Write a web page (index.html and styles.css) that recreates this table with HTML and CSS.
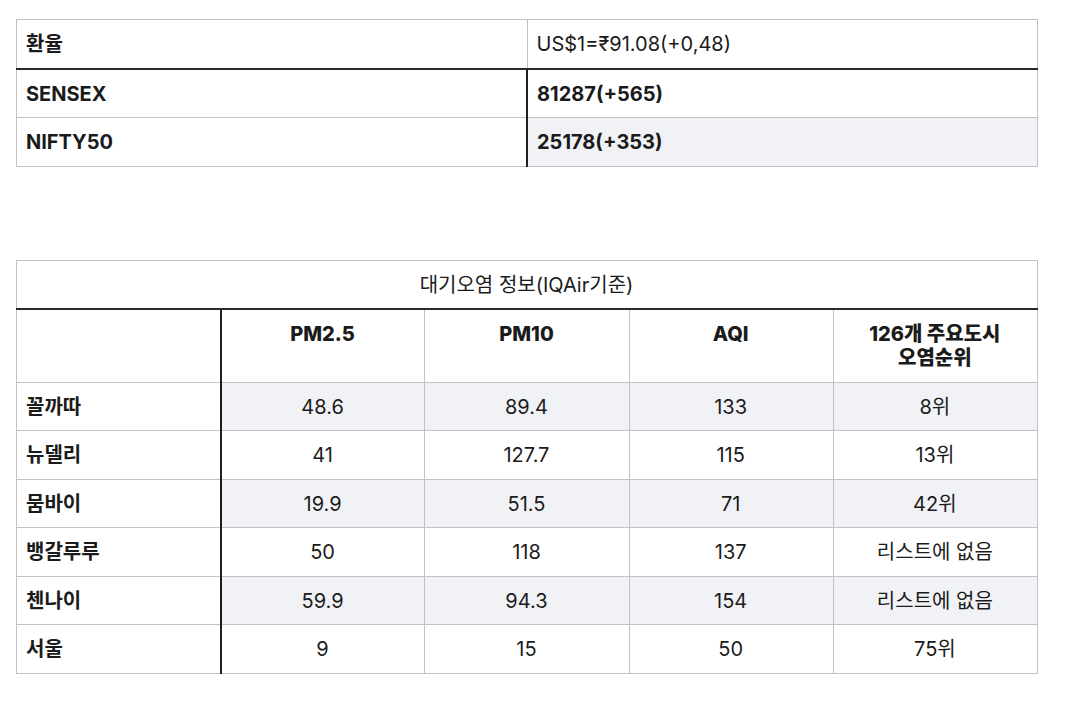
FILE: index.html
```html
<!DOCTYPE html>
<html lang="ko">
<head>
<meta charset="utf-8">
<link rel="stylesheet" href="styles.css">
</head>
<body>
<div class="page">
  <table class="grid fx">
    <thead>
      <tr><th class="lead">환율</th><td>US$1=₹91.08(+0,48)</td></tr>
    </thead>
    <tbody>
      <tr><th class="lead">SENSEX</th><td class="strong">81287(+565)</td></tr>
      <tr><th class="lead">NIFTY50</th><td class="strong">25178(+353)</td></tr>
    </tbody>
  </table>

  <table class="grid air">
    <thead>
      <tr><td class="title" colspan="5">대기오염 정보(IQAir기준)</td></tr>
    </thead>
    <tbody>
      <tr class="heads">
        <th class="lead"></th>
        <th>PM2.5</th>
        <th>PM10</th>
        <th>AQI</th>
        <th>126개 주요도시<br>오염순위</th>
      </tr>
      <tr><th class="lead">꼴까따</th><td>48.6</td><td>89.4</td><td>133</td><td>8위</td></tr>
      <tr><th class="lead">뉴델리</th><td>41</td><td>127.7</td><td>115</td><td>13위</td></tr>
      <tr><th class="lead">뭄바이</th><td>19.9</td><td>51.5</td><td>71</td><td>42위</td></tr>
      <tr><th class="lead">뱅갈루루</th><td>50</td><td>118</td><td>137</td><td>리스트에 없음</td></tr>
      <tr><th class="lead">첸나이</th><td>59.9</td><td>94.3</td><td>154</td><td>리스트에 없음</td></tr>
      <tr><th class="lead">서울</th><td>9</td><td>15</td><td>50</td><td>75위</td></tr>
    </tbody>
  </table>
</div>
</body>
</html>
```

FILE: styles.css
```css
html, body {
  margin: 0;
  padding: 0;
  background: #ffffff;
}

body {
  font-family: "Inter", "Noto Sans CJK KR", "Noto Sans", sans-serif;
  font-size: 20px;
  line-height: 24px;
  color: #1b1b1b;
}

.page {
  padding: 19px 0 0 16px;
  width: 1022px;
}

.grid {
  width: 1022px;
  border-collapse: collapse;
  table-layout: fixed;
  border: 1px solid #bdbdbd;
}

.grid th,
.grid td {
  border: 1px solid #c2c2c2;
  padding: 12px 10px 11.5px 9px;
  vertical-align: middle;
}

.grid thead td,
.grid thead th {
  border-bottom: 2px solid #2a2a2a;
}

.grid tbody .lead {
  border-right: 2px solid #1e1e1e;
}

.lead {
  text-align: left;
  font-weight: 700;
  background: #ffffff;
}

.fx td {
  text-align: left;
  font-weight: 400;
}

.fx td.strong {
  font-weight: 700;
}

.air {
  margin-top: 93px;
}

.air td {
  text-align: center;
}

.air .title {
  text-align: center;
  font-weight: 400;
}

.heads th {
  vertical-align: top;
  text-align: center;
  font-weight: 800;
  background: #ffffff;
}

.grid tbody tr:nth-child(even) td {
  background: #f1f2f6;
}
```
